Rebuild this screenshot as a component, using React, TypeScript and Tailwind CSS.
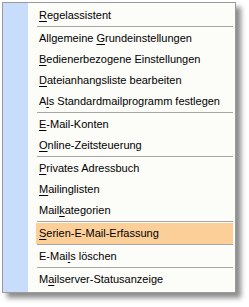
import React from 'react';

type Item = { pre: string; key: string; post: string; active?: boolean };

const groups: Item[][] = [
  [{ pre: '', key: 'R', post: 'egelassistent' }],
  [
    { pre: 'Allgemeine ', key: 'G', post: 'rundeinstellungen' },
    { pre: '', key: 'B', post: 'edienerbezogene Einstellungen' },
    { pre: '', key: 'D', post: 'ateianhangsliste bearbeiten' },
    { pre: 'A', key: 'l', post: 's Standardmailprogramm festlegen' },
  ],
  [
    { pre: '', key: 'E', post: '-Mail-Konten' },
    { pre: '', key: 'O', post: 'nline-Zeitsteuerung' },
  ],
  [
    { pre: '', key: 'P', post: 'rivates Adressbuch' },
    { pre: '', key: 'M', post: 'ailinglisten' },
    { pre: 'Mail', key: 'k', post: 'ategorien' },
  ],
  [{ pre: '', key: 'S', post: 'erien-E-Mail-Erfassung', active: true }],
  [{ pre: 'E-Mai', key: 'l', post: 's löschen' }],
  [{ pre: 'M', key: 'a', post: 'ilserver-Statusanzeige' }],
];

const MenuRow = ({ item }: { item: Item }) => (
  <div
    className={`h-[21px] leading-[21px] ml-[8px] mr-[2px] pl-[3px] whitespace-pre text-[11px] text-black ${
      item.active ? 'bg-[#fccf98]' : ''
    }`}
  >
    {item.pre}
    <span className="underline underline-offset-[2px]">{item.key}</span>
    {item.post}
  </div>
);

const App = () => {
  return (
    <div className="w-[249px] h-[307px] bg-white pt-[2px] pl-[2px]" style={{ fontFamily: '"Liberation Sans", Arial, sans-serif' }}>
      <div className="w-[234px] flex border border-[#9a9a9a] bg-[#fcfcf8] shadow-[5px_5px_5px_rgba(0,0,0,0.45)]">
        {/* Icon strip */}
        <div className="w-[25px] shrink-0 bg-[#c8dcfc]" />

        <div className="flex-1 pt-[2px] pb-[2px]">
          {groups.map((group, gi) => (
            <React.Fragment key={gi}>
              {gi > 0 && <div className="h-[2px] ml-[9px] mr-[2px] border-t border-[#a6a6a6]" />}
              {group.map((item, ii) => (
                <MenuRow key={ii} item={item} />
              ))}
            </React.Fragment>
          ))}
        </div>
      </div>
    </div>
  );
};

export default App;
